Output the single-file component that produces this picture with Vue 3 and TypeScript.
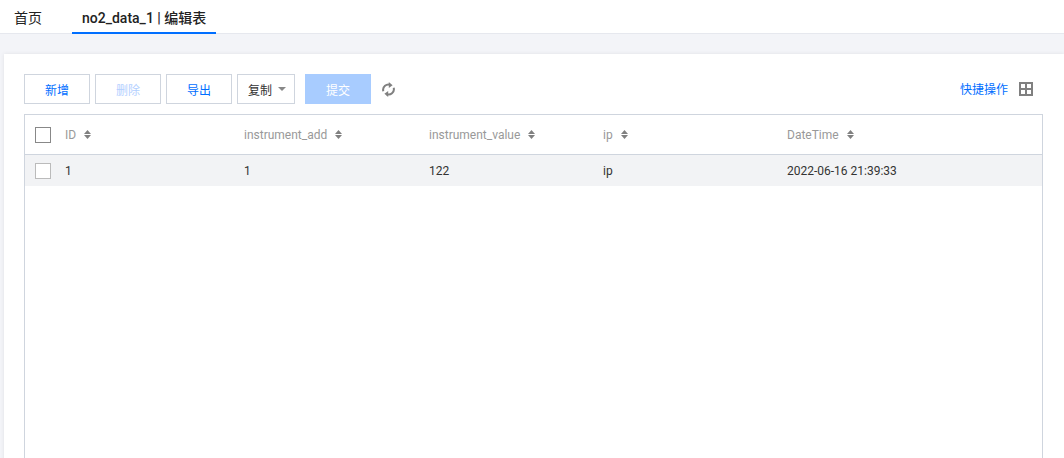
<script setup lang="ts">
interface Column { key: string; label: string }
const columns: Column[] = [
  { key: 'id', label: 'ID' },
  { key: 'add', label: 'instrument_add' },
  { key: 'value', label: 'instrument_value' },
  { key: 'ip', label: 'ip' },
  { key: 'time', label: 'DateTime' },
]
const rows: Record<string, string>[] = [
  { id: '1', add: '1', value: '122', ip: 'ip', time: '2022-06-16 21:39:33' },
]
</script>

<template>
  <div class="page">
    <nav class="tabs">
      <span class="tab home">首页</span>
      <span class="tab active">no2_data_1 | 编辑表</span>
    </nav>
    <main class="card">
      <div class="toolbar">
        <div class="actions">
          <button class="btn">新增</button>
          <button class="btn disabled">删除</button>
          <button class="btn">导出</button>
          <button class="btn select">复制<i class="caret"></i></button>
          <button class="btn primary">提交</button>
          <svg class="refresh" width="13" height="15" viewBox="0 0 13 15" fill="none" stroke="#808080" stroke-width="2">
            <path d="M1.3 9.2A5.3 5.3 0 0 1 8.6 3" />
            <path d="M11.7 5.8A5.3 5.3 0 0 1 4.4 12" />
            <path d="M6.8 0L10.6 3.2L6.8 6Z" fill="#808080" stroke="none" />
            <path d="M6.2 15L2.4 11.8L6.2 9Z" fill="#808080" stroke="none" />
          </svg>
        </div>
        <div class="quick">
          <span class="quick-label">快捷操作</span>
          <svg width="14" height="14" viewBox="0 0 14 14" fill="none" stroke="#808080" stroke-width="2">
            <rect x="1" y="1" width="12" height="12" />
            <path d="M7 1V13M1 7H13" />
          </svg>
        </div>
      </div>
      <div class="table">
        <div class="row head">
          <div class="check-cell"><i class="check dark"></i></div>
          <div v-for="c in columns" :key="c.key" class="cell">
            <span>{{ c.label }}</span>
            <svg class="sort" width="7" height="9" viewBox="0 0 7 9" fill="#808080">
              <path d="M3.5 0L7 4H0Z" />
              <path d="M3.5 9L0 5H7Z" />
            </svg>
          </div>
        </div>
        <div v-for="r in rows" :key="r.id" class="row body">
          <div class="check-cell"><i class="check"></i></div>
          <div v-for="c in columns" :key="c.key" class="cell">{{ r[c.key] }}</div>
        </div>
      </div>
    </main>
  </div>
</template>

<style>
html, body { margin: 0; background: #f3f4f8; }
</style>

<style scoped>
.page {
  width: 1064px;
  height: 458px;
  overflow: hidden;
  display: flex;
  flex-direction: column;
  background: #f3f4f8;
  font-family: Roboto, "Noto Sans CJK SC", sans-serif;
  font-size: 12px;
  color: #333;
}
.tabs {
  height: 33px;
  flex: none;
  display: flex;
  background: #fff;
  border-bottom: 1px solid #e6e8ee;
}
.tab {
  height: 34px;
  box-sizing: border-box;
  line-height: 36px;
  font-size: 14px;
  color: #222;
}
.home { margin-left: 14px; width: 58px; }
.active {
  width: 144px;
  padding-left: 10px;
  font-weight: 500;
  border-bottom: 2px solid #006eff;
}
.card {
  flex: 1;
  margin: 20px 0 0 4px;
  padding: 20px 21px 0 20px;
  background: #fff;
  box-shadow: 0 0 4px rgba(0, 0, 0, 0.08);
}
.toolbar {
  display: flex;
  justify-content: space-between;
  align-items: center;
  height: 30px;
}
.actions {
  display: flex;
  align-items: center;
  gap: 5px;
}
.btn {
  width: 66px;
  height: 30px;
  box-sizing: border-box;
  padding: 0;
  background: #fff;
  border: 1px solid #cfd5de;
  color: #006eff;
  font: inherit;
}
.disabled { color: #b3d0ff; }
.select {
  width: 58px;
  color: #333;
  display: flex;
  align-items: center;
  padding-left: 10px;
  gap: 6px;
}
.caret {
  width: 0;
  height: 0;
  border-left: 4px solid transparent;
  border-right: 4px solid transparent;
  border-top: 4px solid #888;
}
.primary {
  margin-left: 5px;
  background: #a8ccff;
  border-color: #a8ccff;
  color: #fff;
}
.refresh { margin-left: 6px; }
.quick {
  display: flex;
  align-items: center;
  gap: 11px;
  line-height: 18px;
  color: #006eff;
  margin-right: 10px;
}
.quick-label { padding-top: 2px; }
.table {
  margin-top: 10px;
  height: 400px;
  border: 1px solid #cfd5de;
}
.row {
  display: grid;
  grid-template-columns: 40px 179px 185px 174px 184px 1fr;
  align-items: center;
}
.head {
  height: 39px;
  border-bottom: 1px solid #cfd5de;
  color: #999;
}
.body {
  height: 31px;
  background: #f2f3f5;
  color: #333;
}
.check-cell { display: flex; padding-left: 10px; }
.check {
  width: 16px;
  height: 16px;
  box-sizing: border-box;
  border: 1px solid #bbb;
  background: #fff;
}
.dark { border-color: #888; }
.cell {
  display: flex;
  align-items: center;
  gap: 8px;
  padding-top: 2px;
  line-height: 17px;
  white-space: nowrap;
}
.sort { margin-top: -2px; }
</style>
